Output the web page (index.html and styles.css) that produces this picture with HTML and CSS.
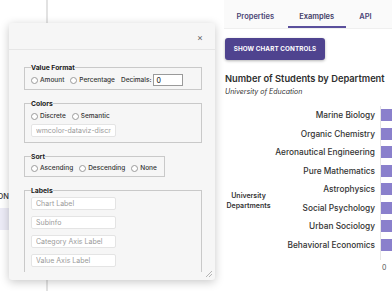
FILE: index.html
```html
<!DOCTYPE html>
<html lang="en">
<head>
    <meta charset="UTF-8">
    <meta name="viewport" content="width=device-width, initial-scale=1.0">
    <title>Bar Chart - Examples</title>
    <link rel="stylesheet" href="styles.css">
</head>
<body>
    <div class="page">
        <aside class="sidebar">
            <div class="nav-heading"><span>DATA VISUALIZATION</span></div>
            <div class="nav-item active">Bar Chart</div>
        </aside>

        <div class="spacer"></div>

        <main class="content">
            <nav class="tabs">
                <a class="tab">Properties</a>
                <a class="tab active">Examples</a>
                <a class="tab">API</a>
            </nav>

            <button class="show-btn">SHOW CHART CONTROLS</button>

            <h2 class="chart-title">Number of Students by Department</h2>
            <p class="chart-sub">University of Education</p>

            <div class="chart">
                <div class="axis-title">University<br>Departments</div>
                <div class="cats">
                    <div class="cat">Marine Biology</div>
                    <div class="cat">Organic Chemistry</div>
                    <div class="cat">Aeronautical Engineering</div>
                    <div class="cat">Pure Mathematics</div>
                    <div class="cat">Astrophysics</div>
                    <div class="cat">Social Psychology</div>
                    <div class="cat">Urban Sociology</div>
                    <div class="cat">Behavioral Economics</div>
                </div>
                <div class="plot">
                    <div class="row"><div class="bar" style="width: 120px"></div></div>
                    <div class="row"><div class="bar" style="width: 110px"></div></div>
                    <div class="row"><div class="bar" style="width: 100px"></div></div>
                    <div class="row"><div class="bar" style="width: 95px"></div></div>
                    <div class="row"><div class="bar" style="width: 90px"></div></div>
                    <div class="row"><div class="bar" style="width: 80px"></div></div>
                    <div class="row"><div class="bar" style="width: 70px"></div></div>
                    <div class="row"><div class="bar" style="width: 60px"></div></div>
                    <div class="tick">0</div>
                </div>
            </div>
        </main>
    </div>

    <div class="dialog">
        <div class="dialog-head">
            <span class="close">&times;</span>
        </div>
        <div class="dialog-body">
            <fieldset>
                <legend>Value Format</legend>
                <div class="opts">
                    <label><input type="radio" name="fmt"> Amount</label>
                    <label><input type="radio" name="fmt"> Percentage</label>
                    <label class="dec">Decimals: <input type="text" class="num" value="0"></label>
                </div>
            </fieldset>

            <fieldset>
                <legend>Colors</legend>
                <div class="opts">
                    <label><input type="radio" name="col"> Discrete</label>
                    <label><input type="radio" name="col"> Semantic</label>
                </div>
                <input type="text" class="field" placeholder="wmcolor-dataviz-discrete">
            </fieldset>

            <fieldset class="sort">
                <legend>Sort</legend>
                <div class="opts">
                    <label><input type="radio" name="sort"> Ascending</label>
                    <label><input type="radio" name="sort"> Descending</label>
                    <label><input type="radio" name="sort"> None</label>
                </div>
            </fieldset>

            <fieldset class="labels">
                <legend>Labels</legend>
                <input type="text" class="field" placeholder="Chart Label">
                <input type="text" class="field" placeholder="Subinfo">
                <input type="text" class="field" placeholder="Category Axis Label">
                <input type="text" class="field" placeholder="Value Axis Label">
                <input type="text" class="field" placeholder="Value Prefix">
            </fieldset>
        </div>
        <svg class="grip" width="8" height="8" viewBox="0 0 8 8">
            <path d="M7 1 L1 7 M7 4 L4 7" stroke="#b5b5b5" stroke-width="1" fill="none"/>
        </svg>
    </div>
</body>
</html>
```

FILE: styles.css
```css
body {
    margin: 0;
    width: 392px;
    height: 291px;
    overflow: hidden;
    font-family: 'Inter', 'Noto Sans', sans-serif;
    background-color: #fff;
    color: #333;
}

.page {
    display: flex;
    height: 291px;
}

/* Left navigation */
.sidebar {
    width: 46px;
    flex: 0 0 46px;
    border-right: 2px solid #e2e2e2;
    padding-top: 191px;
    overflow: hidden;
}

.nav-heading {
    display: flex;
    justify-content: flex-end;
    padding-right: 37px;
    height: 11px;
    font-size: 7.5px;
    font-weight: 500;
    line-height: 11px;
    white-space: nowrap;
    color: #333;
}

.nav-item {
    margin-top: 6px;
    height: 22px;
    font-size: 8px;
    line-height: 22px;
    padding-left: 14px;
}

.nav-item.active {
    background-color: #ecebf6;
}

.spacer {
    flex: 0 0 176px;
}

/* Main content */
.content {
    flex: 0 0 300px;
}

.tabs {
    display: flex;
    height: 28px;
    padding-left: 1px;
    background-color: #fafafa;
    border-bottom: 1px solid #efefef;
}

.tab {
    padding: 0 11.5px;
    margin-right: 2px;
    font-size: 7.5px;
    font-weight: 600;
    line-height: 33px;
    color: #4a4575;
    box-sizing: border-box;
    height: 28px;
}

.tab.active {
    color: #3f3a66;
    border-bottom: 2px solid #5a4f9c;
}

.show-btn {
    display: block;
    margin: 9px 0 0 1px;
    width: 100px;
    height: 22px;
    padding: 0;
    border: none;
    border-radius: 3px;
    background-color: #4f438f;
    color: #fff;
    font-family: inherit;
    font-size: 6.3px;
    font-weight: 700;
    letter-spacing: 0.1px;
    box-shadow: 0 1px 3px rgba(0, 0, 0, 0.3);
}

.chart-title {
    margin: 12px 0 0 1px;
    font-size: 9.3px;
    font-weight: 600;
    line-height: 14px;
    white-space: nowrap;
    color: #2f2f2f;
}

.chart-sub {
    margin: 1px 0 0 1px;
    font-size: 7px;
    font-style: italic;
    line-height: 10px;
    color: #333;
}

/* Bar chart */
.chart {
    display: flex;
    margin-top: 9px;
    margin-left: 1px;
}

.axis-title {
    width: 47px;
    padding-top: 85px;
    font-size: 7px;
    font-weight: 600;
    line-height: 10px;
    text-align: center;
    color: #333;
}

.cats {
    width: 103px;
}

.cat {
    height: 18.5px;
    font-size: 8.3px;
    font-weight: 500;
    line-height: 18.5px;
    text-align: right;
    white-space: nowrap;
    direction: rtl;
    color: #333;
}

.plot {
    margin-left: 5px;
    border-left: 1px solid #e6e6e6;
    height: 154px;
    position: relative;
}

.row {
    height: 18.5px;
    display: flex;
    align-items: center;
}

.bar {
    height: 12px;
    background-color: #8a80cc;
}

.tick {
    position: absolute;
    top: 157px;
    left: 1px;
    font-size: 7px;
    color: #555;
}

/* Chart controls dialog */
.dialog {
    position: absolute;
    left: 9px;
    top: 23px;
    width: 206px;
    height: 257px;
    background-color: #f6f6f6;
    border-radius: 3px;
    box-shadow: 0 2px 10px rgba(0, 0, 0, 0.22);
    font-size: 6.5px;
    color: #333;
}

.dialog-head {
    height: 26px;
    border-bottom: 1px solid #e6e6e6;
    position: relative;
}

.close {
    position: absolute;
    right: 12px;
    top: 9px;
    font-size: 9px;
    color: #666;
}

.dialog-body {
    height: 222px;
    padding: 13px 13px 0 15px;
    box-sizing: border-box;
    overflow: hidden;
}

fieldset {
    margin: 0 0 9px;
    padding: 0 6px 2px;
    border: 1px solid #c9c9c9;
}

fieldset.sort {
    width: fit-content;
}

legend {
    padding: 0;
    font-size: 6.8px;
    font-weight: 700;
    line-height: 9px;
    color: #222;
}

.opts {
    display: flex;
    align-items: center;
    gap: 6px;
    height: 12px;
    margin: 2px 0 1px;
}

.sort .opts {
    height: 10px;
    padding-right: 1px;
}

.opts label {
    display: flex;
    align-items: center;
    white-space: nowrap;
    font-weight: 500;
}

input[type="radio"] {
    appearance: none;
    margin: 0 2px 0 0;
    width: 7px;
    height: 7px;
    border: 1px solid #9a9a9a;
    border-radius: 50%;
    background-color: #fff;
}

.num {
    margin-left: 2px;
    width: 30px;
    height: 12px;
    box-sizing: border-box;
    padding: 0 2px;
    border: 1px solid #9a9a9a;
    font-family: inherit;
    font-size: 7px;
    background-color: #fff;
}

.field {
    display: block;
    width: 85px;
    height: 13px;
    box-sizing: border-box;
    margin: 2px 0 3px;
    padding: 0 4px;
    border: 1px solid #e4e4e4;
    border-radius: 2px;
    background-color: #fff;
    font-family: inherit;
    font-size: 7px;
}

.field::placeholder {
    color: #9a9a9a;
}

.labels .field {
    margin: 2px 0 6px;
}

.grip {
    position: absolute;
    right: 2px;
    bottom: 2px;
}
```
